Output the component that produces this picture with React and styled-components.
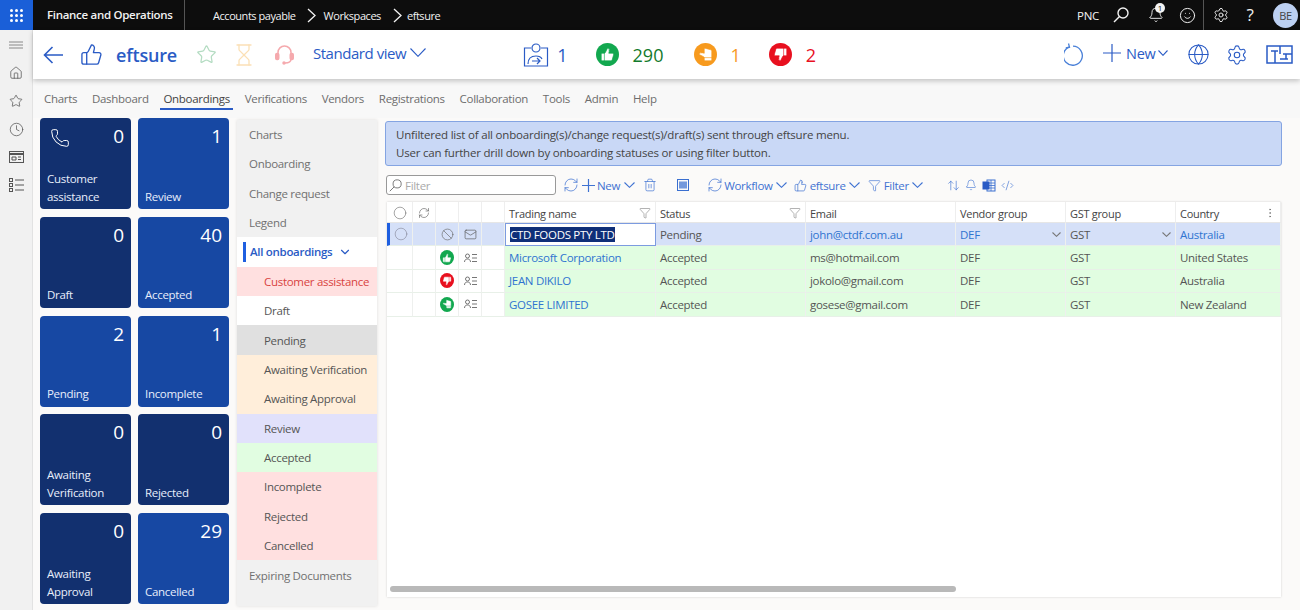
import React from 'react';
import styled, { createGlobalStyle } from 'styled-components';
import {
  Ban, Bell, Circle, Clock, CodeXml, EllipsisVertical, Funnel,
  Globe, Hourglass, House, Mail, Phone, RefreshCw, Settings,
  Smile, Star, ThumbsUp, Trash2, ArrowUpDown, ChevronDown,
} from 'lucide-react';

const GlobalStyle = createGlobalStyle`
  html, body { margin: 0; padding: 0; background: #fbfaf9; }
  body {
    font-family: "Open Sans", "Noto Sans", sans-serif;
    font-size: 11.5px;
    letter-spacing: -0.3px;
    color: #444;
  }
  * { box-sizing: border-box; }
`;

const Shell = styled.div`
  width: 1300px;
  height: 610px;
  overflow: hidden;
  display: flex;
  flex-direction: column;
`;

const TopBar = styled.div`
  height: 30px;
  flex: none;
  background: #0d0d0d;
  color: #f2f2f2;
  display: flex;
  align-items: center;
`;

const Waffle = styled.div`
  width: 33px;
  height: 30px;
  background: #1a5fd8;
  display: grid;
  grid-template-columns: repeat(3, 3px);
  grid-auto-rows: 3px;
  gap: 2px;
  place-content: center;
  span { background: #fff; border-radius: 50%; }
`;

const AppName = styled.div`
  width: 152px;
  height: 30px;
  padding-left: 14px;
  font-weight: 600;
  line-height: 30px;
  border-right: 1px solid #555;
`;

const Crumbs = styled.div`
  margin-left: 28px;
  display: flex;
  align-items: center;
  font-size: 11px;
  letter-spacing: -0.45px;
`;

const CrumbArrow = styled.svg`
  margin: 0 ${(p) => p.$right}px 0 ${(p) => p.$left}px;
`;

const TopRight = styled.div`
  margin-left: auto;
  display: flex;
  align-items: center;
  height: 30px;
  color: #f2f2f2;
`;

const TenantName = styled.span`
  margin-right: 6px;
`;

const TopIcon = styled.div`
  width: ${(p) => p.$w}px;
  display: flex;
  justify-content: center;
  position: relative;
`;

const BellCount = styled.span`
  position: absolute;
  top: -4px;
  right: 10px;
  width: 10px;
  height: 10px;
  border-radius: 50%;
  background: #f2f2f2;
  color: #111;
  font-size: 8px;
  line-height: 10px;
  text-align: center;
`;

const HelpMark = styled.span`
  font-size: 17px;
  line-height: 20px;
`;

const TopDivider = styled.div`
  width: 1px;
  height: 30px;
  background: #555;
  margin: 0 5px 0 4px;
`;

const Avatar = styled.div`
  width: 25px;
  height: 25px;
  margin: 0 2px 0 6px;
  border-radius: 50%;
  background: #bcd0f2;
  color: #444;
  font-size: 11px;
  line-height: 25px;
  text-align: center;
`;

const Body = styled.div`
  flex: 1;
  display: flex;
  min-height: 0;
`;

const Rail = styled.div`
  width: 33px;
  flex: none;
  background: #f1f1f1;
  border-right: 1px solid #e2e2e2;
  display: flex;
  flex-direction: column;
  align-items: center;
  padding-top: 1px;
  color: #555;
`;

const RailItem = styled.div`
  height: 28px;
  flex: none;
  display: flex;
  align-items: center;
  justify-content: center;
`;

const Main = styled.div`
  flex: 1;
  display: flex;
  flex-direction: column;
  min-width: 0;
`;

const Header = styled.div`
  height: 49px;
  flex: none;
  background: #fff;
  box-shadow: 0 2px 5px rgba(0, 0, 0, 0.22);
  display: flex;
  align-items: center;
  color: #2a5bc5;
  position: relative;
  padding-left: 10px;
`;

const HeaderItem = styled.div`
  flex: none;
  display: flex;
  align-items: center;
  margin-left: ${(p) => p.$left || 0}px;
  margin-bottom: ${(p) => p.$up || 0}px;
  color: ${(p) => p.$color || 'inherit'};
`;

const PageTitle = styled.div`
  font-size: 18px;
  font-weight: 600;
  letter-spacing: -0.2px;
`;

const ViewName = styled.div`
  font-size: 15px;
  letter-spacing: -0.45px;
  margin-right: 4px;
`;

const StatValue = styled.div`
  font-size: 18px;
  letter-spacing: 0;
  margin-left: ${(p) => p.$left}px;
  color: ${(p) => p.$color};
`;

const Badge = styled.div`
  width: ${(p) => p.$size}px;
  height: ${(p) => p.$size}px;
  border-radius: 50%;
  background: ${(p) => p.$color};
  display: flex;
  align-items: center;
  justify-content: center;
  color: ${(p) => p.$color};
  svg {
    transform: rotate(${(p) => p.$turn || 0}deg);
    fill: #fff;
    stroke: ${(p) => p.$color};
  }
`;

const NewLabel = styled.div`
  font-size: 14.5px;
  font-weight: 500;
  letter-spacing: -0.3px;
  margin: 0 3px 0 5px;
`;

const Tabs = styled.div`
  height: 39px;
  flex: none;
  display: flex;
  align-items: center;
  gap: 14.8px;
  padding-left: 11px;
  background: #f8f8f8;
  color: #6d6d6d;
`;

const Tab = styled.div`
  padding: 4px 3px 2px;
  margin: 0 -3px;
  border-bottom: 2px solid ${(p) => (p.$active ? '#2a5bc5' : 'transparent')};
  color: ${(p) => (p.$active ? '#444' : 'inherit')};
`;

const Content = styled.div`
  flex: 1;
  display: flex;
  padding-left: 7px;
  min-height: 0;
`;

const TileGrid = styled.div`
  display: grid;
  grid-template-columns: 91px 91px;
  grid-auto-rows: 91px;
  column-gap: 7px;
  row-gap: 7.75px;
  align-content: start;
  flex: none;
`;

const Tile = styled.div`
  border-radius: 4px;
  background: ${(p) => (p.$dark ? '#12306f' : '#1748a3')};
  color: #fff;
  padding: 5px 7px 3.5px 7px;
  display: flex;
  flex-direction: column;
  justify-content: space-between;
`;

const TileTop = styled.div`
  display: flex;
  justify-content: space-between;
  align-items: flex-start;
`;

const TilePhone = styled(Phone)`
  margin: 5px 0 0 3px;
`;

const TileCount = styled.div`
  margin-left: auto;
  font-size: 19px;
  letter-spacing: 0;
  line-height: 26px;
`;

const TileLabel = styled.div`
  line-height: 18px;
  color: #e8eefb;
`;

const Nav = styled.div`
  width: 140px;
  height: 486px;
  margin: 1.6px 0 0 8px;
  flex: none;
  background: #f1f1f1;
  box-shadow: 0 0 3px rgba(0, 0, 0, 0.12);
`;

const NavItem = styled.div`
  height: 29.4px;
  display: flex;
  align-items: center;
  padding-left: ${(p) => (p.$sub ? 27 : 12)}px;
  background: ${(p) => p.$bg || 'transparent'};
  color: ${(p) => p.$color || '#707070'};
`;

const NavActive = styled(NavItem)`
  position: relative;
  background: #fff;
  color: #2a5bc5;
  font-weight: 600;
  gap: 6px;
  padding-left: 13px;
  &::before {
    content: '';
    position: absolute;
    left: 6px;
    top: 5px;
    bottom: 5px;
    width: 2.5px;
    background: #1f5fe0;
  }
`;

const Work = styled.div`
  width: 897px;
  margin-left: 8px;
  flex: none;
  display: flex;
  flex-direction: column;
  padding-top: 3px;
`;

const InfoBox = styled.div`
  height: 45px;
  flex: none;
  background: #c9d8f6;
  border: 1px solid #84a4e2;
  border-radius: 3px;
  padding: 3.5px 0 0 10px;
  line-height: 18px;
  letter-spacing: -0.2px;
  color: #444;
`;

const Toolbar = styled.div`
  height: 20px;
  margin-top: 9px;
  flex: none;
  display: flex;
  align-items: center;
  color: #3f72d2;
`;

const FilterBox = styled.div`
  width: 170px;
  height: 20px;
  flex: none;
  margin-left: 1px;
  border: 1px solid #999;
  border-radius: 3px;
  background: #fff;
  display: flex;
  align-items: center;
  gap: 3px;
  padding-left: 2px;
  color: #aaa;
  svg { color: #777; }
`;

const ToolItem = styled.div`
  flex: none;
  display: flex;
  align-items: center;
  gap: ${(p) => p.$gap ?? 3}px;
  margin-left: ${(p) => p.$left || 0}px;
`;

const ToolCaret = styled.span`
  display: flex;
  margin-left: ${(p) => p.$left}px;
`;

const Grid = styled.div`
  width: 894px;
  height: 395px;
  margin: 7px 0 0 2px;
  flex: none;
  background: #fff;
  box-shadow: 0 0 2px rgba(0, 0, 0, 0.18);
  position: relative;
  display: grid;
  grid-template-columns: 26px 23px 23px 23px 23px 151px 150px 150px 110px 110px 105px;
  grid-template-rows: 21px;
  grid-auto-rows: 23.4px;
  align-content: start;
`;

const HeadCell = styled.div`
  border-right: 1px solid #eee;
  border-bottom: 1px solid #e6e6e6;
  padding: 2px 4px 0;
  display: flex;
  align-items: center;
  justify-content: ${(p) => (p.$center ? 'center' : 'space-between')};
  color: #444;
  font-weight: 500;
  font-size: 11px;
  letter-spacing: -0.3px;
  svg { color: #666; flex: none; }
`;

const Cell = styled.div`
  border-right: 1px solid #eef0ee;
  border-bottom: 1px solid #e8f0e8;
  padding: 0 4px;
  display: flex;
  align-items: center;
  justify-content: ${(p) => (p.$center ? 'center' : 'space-between')};
  background: ${(p) => p.$bg};
  color: ${(p) => p.$color || '#555'};
  white-space: nowrap;
  svg { flex: none; }
`;

const MarkerCell = styled(Cell)`
  border-left: 3px solid #1f5fe0;
  padding: 0;
`;

const EditCell = styled(Cell)`
  background: #fff;
  border: 1px solid #7c9be0;
`;

const SelectedText = styled.span`
  background: #0f2f78;
  color: #fff;
`;

const Scrollbar = styled.div`
  position: absolute;
  left: 3px;
  bottom: 5px;
  width: 566px;
  height: 6px;
  border-radius: 3px;
  background: #b9b9b9;
`;

const tiles = [
  ['Customer assistance', 0, true, true], ['Review', 1, false],
  ['Draft', 0, true], ['Accepted', 40, false],
  ['Pending', 2, false], ['Incomplete', 1, false],
  ['Awaiting Verification', 0, true], ['Rejected', 0, true],
  ['Awaiting Approval', 0, true], ['Cancelled', 29, false],
];

const tabs = ['Charts', 'Dashboard', 'Onboardings', 'Verifications', 'Vendors', 'Registrations', 'Collaboration', 'Tools', 'Admin', 'Help'];

const subNav = [
  ['Customer assistance', '#ffe0e0', '#d8433f'],
  ['Draft', '#fff'],
  ['Pending', '#e0e0e0'],
  ['Awaiting Verification', '#ffeeda'],
  ['Awaiting Approval', '#ffeeda'],
  ['Review', '#e1e1fb'],
  ['Accepted', '#e1fde1'],
  ['Incomplete', '#ffe0e0'],
  ['Rejected', '#ffe0e0'],
  ['Cancelled', '#ffe0e0'],
];

const rows = [
  { icon: ['#12a84f', 0], name: 'Microsoft Corporation', email: 'ms@hotmail.com', country: 'United States' },
  { icon: ['#e8101f', 180], name: 'JEAN DIKILO', email: 'jokolo@gmail.com', country: 'Australia' },
  { icon: ['#12a84f', -90], name: 'GOSEE LIMITED', email: 'gosese@gmail.com', country: 'New Zealand' },
];

const LINK = '#2f74d0';
const GREEN = '#e1fde1';
const SELECTED = '#d5e0f8';

function Caret({ w = 11, h = 6, stroke = 'currentColor' }) {
  return (
    <svg width={w} height={h} viewBox={`0 0 ${w} ${h}`} fill="none" stroke={stroke} strokeWidth="1.1">
      <path d={`M0.500 0.500L${w / 2} ${h - 0.7}L${w - 0.5} 0.500`} />
    </svg>
  );
}

function Cross({ size }) {
  return (
    <svg width={size} height={size} viewBox={`0 0 ${size} ${size}`} stroke="currentColor" strokeWidth="1.2">
      <path d={`M0 ${size / 2}H${size}M${size / 2} 0V${size}`} />
    </svg>
  );
}

function Magnifier({ size, weight = 1.4 }) {
  return (
    <svg width={size} height={size} viewBox="0 0 16 16" fill="none" stroke="currentColor" strokeWidth={weight}>
      <circle cx="10" cy="6" r="5" />
      <path d="M6.500 9.500L1 15" />
    </svg>
  );
}

function BackArrow() {
  return (
    <svg width="20" height="18" viewBox="0 0 20 18" fill="none" stroke="#2a5bc5" strokeWidth="1.6">
      <path d="M20 9H1.500M9.500 1L1.500 9l8 8" />
    </svg>
  );
}

function HeadsetIcon() {
  return (
    <svg width="19" height="21" viewBox="0 0 19 21" fill="none" stroke="currentColor" strokeWidth="1.5">
      <path d="M3 10V8.500a6.500 6.500 0 0 1 13 0V10" />
      <path d="M16 15c0 2.500-2.500 4-6 4" />
      <rect x="0.750" y="9.500" width="3" height="6" rx="1.200" fill="currentColor" />
      <rect x="15.250" y="9.500" width="3" height="6" rx="1.200" fill="currentColor" />
      <circle cx="9" cy="19" r="1" fill="currentColor" />
    </svg>
  );
}

function RefreshRing() {
  return (
    <svg width="21" height="23" viewBox="0 0 21 23" fill="none" stroke="#4a80d8" strokeWidth="1.3">
      <path d="M5.500 3.800A9.500 9.500 0 1 0 9 3.200" />
      <path d="M4.500 0.500L5.500 4.200L1.800 5" />
    </svg>
  );
}

function PersonBoard() {
  return (
    <svg width="26" height="24" viewBox="0 0 26 24" fill="none" stroke="#2a5bc5" strokeWidth="1.2">
      <circle cx="13" cy="5" r="4" />
      <path d="M8 5H1.500v18h23V5H18" />
      <path d="M5 21c0-5 3-8 8-8 3 0 5 1 6 3M9 18h8M14 15l3 3-3 3" />
    </svg>
  );
}

function LayoutIcon() {
  return (
    <svg width="27" height="19" viewBox="0 0 27 19" fill="none" stroke="#2a5bc5" strokeWidth="1.5">
      <rect x="1" y="1" width="25" height="17" />
      <path d="M5 6h7M9 6v12M14 1v8M17 9h9M20 9v5M14 14h8" />
    </svg>
  );
}

function SheetIcon() {
  return (
    <svg width="12" height="12" viewBox="0 0 12 12" fill="#3a6fd0">
      <rect x="0.500" y="0.500" width="11" height="11" fill="none" stroke="#3a6fd0" />
      <rect x="2" y="2.500" width="8" height="7" opacity="0.7" />
    </svg>
  );
}

function ExcelIcon() {
  return (
    <svg width="14" height="13" viewBox="0 0 14 13">
      <rect x="5" y="1" width="8" height="11" fill="none" stroke="#3a6fd0" />
      <path d="M5 4h8M5 6.500h8M5 9h8M9 1v11" stroke="#3a6fd0" strokeWidth="0.8" />
      <rect x="0.500" y="2.500" width="7" height="8" fill="#2a5bc5" />
    </svg>
  );
}

function ContactList() {
  return (
    <svg width="13" height="10" viewBox="0 0 13 10" fill="none" stroke="#666" strokeWidth="0.9">
      <circle cx="3.500" cy="3" r="2" />
      <path d="M0.500 9c0-2 1.300-3 3-3s3 1 3 3M8 1.500h5M8 5h5M8 8.500h5" />
    </svg>
  );
}

function ListIcon() {
  return (
    <svg width="15" height="14" viewBox="0 0 15 14" fill="none" stroke="#555">
      <rect x="0.500" y="0.500" width="3" height="3" />
      <rect x="0.500" y="5.500" width="3" height="3" />
      <rect x="0.500" y="10.500" width="3" height="3" />
      <path d="M6 2h9M6 7h9M6 12h9" />
    </svg>
  );
}

function CardsIcon() {
  return (
    <svg width="15" height="12" viewBox="0 0 15 12" fill="none" stroke="#555">
      <rect x="0.500" y="0.500" width="14" height="11" />
      <path d="M0.500 3h14" strokeWidth="2" />
      <path d="M3 6h4v3H3zM9 6h3M9 8.500h3" />
    </svg>
  );
}

function CrumbChevron({ left, right }) {
  return (
    <CrumbArrow $left={left} $right={right} width="9" height="15" viewBox="0 0 9 15" fill="none" stroke="#f2f2f2" strokeWidth="1.3">
      <path d="M1 1l7 6.500L1 14" />
    </CrumbArrow>
  );
}

function App() {
  return (
    <Shell>
      <GlobalStyle />
      <TopBar>
        <Waffle>{Array.from({ length: 9 }, (_, i) => <span key={i} />)}</Waffle>
        <AppName>Finance and Operations</AppName>
        <Crumbs>
          <span>Accounts payable</span>
          <CrumbChevron left={11} right={8} />
          <span>Workspaces</span>
          <CrumbChevron left={12} right={5} />
          <span>eftsure</span>
        </Crumbs>
        <TopRight>
          <TenantName>PNC</TenantName>
          <TopIcon $w={32}><Magnifier size={16} /></TopIcon>
          <TopIcon $w={38}><Bell size={16} strokeWidth={1.4} /><BellCount>1</BellCount></TopIcon>
          <TopIcon $w={24}><Smile size={17} strokeWidth={1.4} /></TopIcon>
          <TopDivider />
          <TopIcon $w={24}><Settings size={16} strokeWidth={1.4} /></TopIcon>
          <TopIcon $w={34}><HelpMark>?</HelpMark></TopIcon>
          <Avatar>BE</Avatar>
        </TopRight>
      </TopBar>
      <Body>
        <Rail>
          <RailItem>
            <svg width="14" height="8" viewBox="0 0 14 8" stroke="#888"><path d="M0 1h14M0 4h14M0 7h14" /></svg>
          </RailItem>
          <RailItem><House size={14} strokeWidth={1.3} /></RailItem>
          <RailItem><Star size={14} strokeWidth={1.3} /></RailItem>
          <RailItem><Clock size={15} strokeWidth={1.2} /></RailItem>
          <RailItem><CardsIcon /></RailItem>
          <RailItem><ListIcon /></RailItem>
        </Rail>
        <Main>
          <Header>
            <HeaderItem><BackArrow /></HeaderItem>
            <HeaderItem $left={17}><ThumbsUp size={23} strokeWidth={1.4} /></HeaderItem>
            <HeaderItem $left={13}><PageTitle>eftsure</PageTitle></HeaderItem>
            <HeaderItem $left={19} $color="#b4dcc2"><Star size={21} strokeWidth={1.4} /></HeaderItem>
            <HeaderItem $left={15} $color="#fbe0b6"><Hourglass size={24} strokeWidth={1.3} /></HeaderItem>
            <HeaderItem $left={19} $color="#f5a9ad"><HeadsetIcon /></HeaderItem>
            <HeaderItem $left={19} $up={4}><ViewName>Standard view</ViewName><Caret w={16} h={9} /></HeaderItem>
            <HeaderItem $left={97}><PersonBoard /><StatValue $left={8} $color="#2a5bc5">1</StatValue></HeaderItem>
            <HeaderItem $left={28}><Badge $size={23} $color="#12a84f"><ThumbsUp size={15} strokeWidth={1} /></Badge><StatValue $left={14} $color="#137a2c">290</StatValue></HeaderItem>
            <HeaderItem $left={31}><Badge $size={23} $color="#f79a1e" $turn={-90}><ThumbsUp size={15} strokeWidth={1} /></Badge><StatValue $left={13} $color="#f79a1e">1</StatValue></HeaderItem>
            <HeaderItem $left={28}><Badge $size={23} $color="#e8101f" $turn={180}><ThumbsUp size={15} strokeWidth={1} /></Badge><StatValue $left={14} $color="#e8101f">2</StatValue></HeaderItem>
            <HeaderItem $left={248}><RefreshRing /></HeaderItem>
            <HeaderItem $left={18} $up={3}><Cross size={18} /><NewLabel>New</NewLabel><Caret w={10} h={6} /></HeaderItem>
            <HeaderItem $left={19}><Globe size={23} strokeWidth={1.1} /></HeaderItem>
            <HeaderItem $left={16}><Settings size={22} strokeWidth={1.2} /></HeaderItem>
            <HeaderItem $left={18}><LayoutIcon /></HeaderItem>
          </Header>
          <Tabs>
            {tabs.map((t) => <Tab key={t} $active={t === 'Onboardings'}>{t}</Tab>)}
          </Tabs>
          <Content>
            <TileGrid>
              {tiles.map(([label, count, dark, phone]) => (
                <Tile key={label} $dark={dark}>
                  <TileTop>
                    {phone && <TilePhone size={20} strokeWidth={1.2} />}
                    <TileCount>{count}</TileCount>
                  </TileTop>
                  <TileLabel>{label}</TileLabel>
                </Tile>
              ))}
            </TileGrid>
            <Nav>
              <NavItem>Charts</NavItem>
              <NavItem>Onboarding</NavItem>
              <NavItem>Change request</NavItem>
              <NavItem>Legend</NavItem>
              <NavActive>All onboardings <ChevronDown size={14} strokeWidth={2} /></NavActive>
              {subNav.map(([label, bg, color]) => (
                <NavItem key={label} $sub $bg={bg} $color={color || '#555'}>{label}</NavItem>
              ))}
              <NavItem>Expiring Documents</NavItem>
            </Nav>
            <Work>
              <InfoBox>
                <div>Unfiltered list of all onboarding(s)/change request(s)/draft(s) sent through eftsure menu.</div>
                <div>User can further drill down by onboarding statuses or using filter button.</div>
              </InfoBox>
              <Toolbar>
                <FilterBox><Magnifier size={13} weight={1.2} />Filter</FilterBox>
                <ToolItem $left={7}><RefreshCw size={16} strokeWidth={1.1} /></ToolItem>
                <ToolItem $left={3} $gap={2}><Cross size={13} />New<ToolCaret $left={2}><Caret /></ToolCaret></ToolItem>
                <ToolItem $left={8}><Trash2 size={14} strokeWidth={1.2} /></ToolItem>
                <ToolItem $left={20}><SheetIcon /></ToolItem>
                <ToolItem $left={18} $gap={1}><RefreshCw size={16} strokeWidth={1.1} />Workflow<ToolCaret $left={2}><Caret /></ToolCaret></ToolItem>
                <ToolItem $left={7}><ThumbsUp size={13} strokeWidth={1.3} />eftsure<Caret /></ToolItem>
                <ToolItem $left={8}><Funnel size={13} strokeWidth={1.2} />Filter<Caret /></ToolItem>
                <ToolItem $left={24}><ArrowUpDown size={13} strokeWidth={1.2} /></ToolItem>
                <ToolItem $left={5}><Bell size={12} strokeWidth={1.2} /></ToolItem>
                <ToolItem $left={5}><ExcelIcon /></ToolItem>
                <ToolItem $left={5}><CodeXml size={13} strokeWidth={1.2} /></ToolItem>
              </Toolbar>
              <Grid>
                <HeadCell $center><Circle size={14} strokeWidth={1} /></HeadCell>
                <HeadCell $center><RefreshCw size={12} strokeWidth={1.3} /></HeadCell>
                <HeadCell />
                <HeadCell />
                <HeadCell />
                <HeadCell>Trading name<Funnel size={12} strokeWidth={1} /></HeadCell>
                <HeadCell>Status<Funnel size={12} strokeWidth={1} /></HeadCell>
                <HeadCell>Email</HeadCell>
                <HeadCell>Vendor group</HeadCell>
                <HeadCell>GST group</HeadCell>
                <HeadCell>Country<EllipsisVertical size={12} strokeWidth={1.2} /></HeadCell>

                <MarkerCell $center $bg={SELECTED}><Circle size={14} strokeWidth={0.9} color="#778" /></MarkerCell>
                <Cell $bg={SELECTED} />
                <Cell $center $bg={SELECTED}><Ban size={13} strokeWidth={1.2} color="#666" /></Cell>
                <Cell $center $bg={SELECTED}><Mail size={13} strokeWidth={1.2} color="#555" /></Cell>
                <Cell $bg={SELECTED} />
                <EditCell><SelectedText>CTD FOODS PTY LTD</SelectedText></EditCell>
                <Cell $bg={SELECTED}>Pending</Cell>
                <Cell $bg={SELECTED} $color={LINK}>john@ctdf.com.au</Cell>
                <Cell $bg={SELECTED} $color={LINK}>DEF<Caret w={9} h={5} stroke="#777" /></Cell>
                <Cell $bg={SELECTED}>GST<Caret w={9} h={5} stroke="#777" /></Cell>
                <Cell $bg={SELECTED} $color={LINK}>Australia</Cell>

                {rows.map((r) => (
                  <React.Fragment key={r.name}>
                    <Cell $bg="#fff" />
                    <Cell $bg="#fff" />
                    <Cell $center $bg="#fff">
                      <Badge $size={15} $color={r.icon[0]} $turn={r.icon[1]}><ThumbsUp size={10} strokeWidth={1} /></Badge>
                    </Cell>
                    <Cell $center $bg="#fff"><ContactList /></Cell>
                    <Cell $bg="#fff" />
                    <Cell $bg={GREEN} $color={LINK}>{r.name}</Cell>
                    <Cell $bg={GREEN}>Accepted</Cell>
                    <Cell $bg={GREEN}>{r.email}</Cell>
                    <Cell $bg={GREEN}>DEF</Cell>
                    <Cell $bg={GREEN}>GST</Cell>
                    <Cell $bg={GREEN}>{r.country}</Cell>
                  </React.Fragment>
                ))}
                <Scrollbar />
              </Grid>
            </Work>
          </Content>
        </Main>
      </Body>
    </Shell>
  );
}

export default App;
